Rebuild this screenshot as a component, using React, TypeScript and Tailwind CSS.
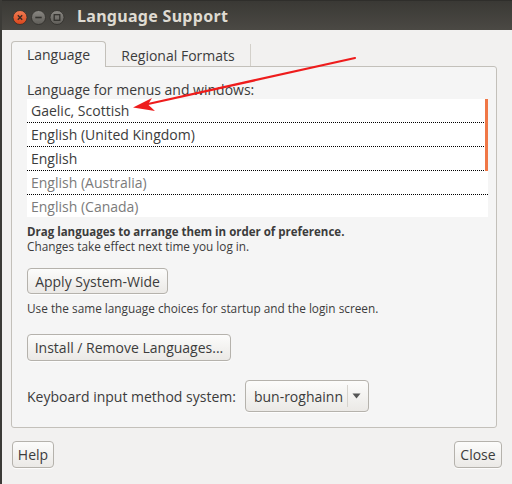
import React from "react";

const font = { fontFamily: '"Open Sans", "Noto Sans", sans-serif' };

const languages = [
  { name: "Gaelic, Scottish", active: true },
  { name: "English (United Kingdom)", active: true },
  { name: "English", active: true },
  { name: "English (Australia)", active: false },
  { name: "English (Canada)", active: false },
];

const btn =
  "flex items-center justify-center rounded-[4px] border border-[#b5b2ac] bg-gradient-to-b from-[#fcfcfb] to-[#ebe9e6] text-[#3c3c3c] shadow-[0_1px_0_rgba(255,255,255,0.8)]";

const TitleButtons: React.FC = () => (
  <svg width="64" height="30" viewBox="0 0 64 30" className="shrink-0">
    <defs>
      <linearGradient id="cl" x1="0" y1="0" x2="0" y2="1">
        <stop offset="0" stopColor="#f27d54" />
        <stop offset="1" stopColor="#d9451b" />
      </linearGradient>
      <linearGradient id="gr" x1="0" y1="0" x2="0" y2="1">
        <stop offset="0" stopColor="#8a8883" />
        <stop offset="1" stopColor="#5f5d58" />
      </linearGradient>
    </defs>
    <circle cx="18" cy="16.5" r="7" fill="url(#cl)" stroke="#2e2d2a" strokeWidth="0.8" />
    <path d="M15.8 14.3 L20.2 18.7 M20.2 14.3 L15.8 18.7" stroke="#3a2a24" strokeWidth="1.4" />
    <circle cx="36.5" cy="16.5" r="7" fill="url(#gr)" stroke="#2e2d2a" strokeWidth="0.8" />
    <path d="M33.3 16.5 H39.7" stroke="#34332f" strokeWidth="1.6" />
    <circle cx="55" cy="16.5" r="7" fill="url(#gr)" stroke="#2e2d2a" strokeWidth="0.8" />
    <rect x="52.2" y="13.7" width="5.6" height="5.6" fill="none" stroke="#34332f" strokeWidth="1.3" />
  </svg>
);

const App: React.FC = () => {
  return (
    <div
      className="relative w-[512px] h-[484px] flex flex-col bg-[#f2f1f0] border-l-2 border-[#3c3b37] overflow-hidden"
      style={font}
    >
      {/* title bar */}
      <div className="h-[30px] flex items-center bg-gradient-to-b from-[#3a3935] to-[#4b4944] border-t border-[#2f2e2b]">
        <TitleButtons />
        <span
          className="ml-[11px] text-[16px] font-bold text-[#dfdbd2] tracking-[0.3px]"
          style={{ fontFamily: '"Noto Sans", "Open Sans", sans-serif' }}
        >
          Language Support
        </span>
      </div>

      {/* tabs */}
      <div className="flex items-end ml-[9px] mt-[11px] h-[25px]">
        <div className="relative z-10 h-[26px] w-[95px] mb-[-1px] flex items-center justify-center rounded-t-[4px] border border-b-0 border-[#c3c0ba] bg-[#f5f5f5] text-[14px] text-[#3c3c3c]">
          Language
        </div>
        <div className="h-[22px] w-[145px] flex items-center justify-center border-r border-[#d3d0ca] text-[14px] text-[#3c3c3c]">
          Regional Formats
        </div>
      </div>

      {/* notebook panel */}
      <div className="ml-[9px] w-[486px] border border-[#c3c0ba] rounded-b-[3px] rounded-tr-[3px] bg-[#f5f5f5] pl-[15px] pt-[14px] pb-[15px]">
        <div className="leading-[18px] text-[14px] text-[#3c3c3c]">
          Language for menus and windows:
        </div>
        <div className="relative w-[461px] bg-white">
          {languages.map((l, i) => (
            <div
              key={l.name}
              className={
                i < languages.length - 1
                  ? "h-[24px] flex items-center pl-[4px] border-b border-dotted border-black text-[14px]"
                  : "h-[22px] flex items-center pl-[4px] text-[14px]"
              }
            >
              <span className={l.active ? "text-[#3c3c3c]" : "text-[#7b7b7b]"}>{l.name}</span>
            </div>
          ))}
          <div className="absolute right-0 top-0 w-[3px] h-[72px] bg-[#f07746]" />
        </div>

        <div className="mt-[7px] leading-[15px] text-[11.5px] font-bold text-[#3c3c3c]">
          Drag languages to arrange them in order of preference.
        </div>
        <div className="leading-[15px] text-[11.8px] text-[#3c3c3c]">
          Changes take effect next time you log in.
        </div>

        <button className={`${btn} mt-[14px] w-[141px] h-[26px] text-[14px]`}>
          Apply System-Wide
        </button>

        <div className="mt-[7px] leading-[15px] text-[11.8px] text-[#3c3c3c]">
          Use the same language choices for startup and the login screen.
        </div>

        <button className={`${btn} mt-[18px] w-[204px] h-[27px] text-[14px]`}>
          Install / Remove Languages...
        </button>

        <div className="mt-[19px] flex items-center gap-[9px]">
          <span className="text-[14px] text-[#3c3c3c]">Keyboard input method system:</span>
          <div className={`${btn} w-[124px] h-[32px] justify-start pl-[8px] text-[14px]`}>
            <span>bun-roghainn</span>
            <span className="ml-[4px] w-px h-[22px] bg-[#d6d3ce]" />
            <svg width="9" height="6" viewBox="0 0 9 6" className="ml-[4px]">
              <path d="M0.5 0.5 H8.5 L4.5 5.5 Z" fill="#555" />
            </svg>
          </div>
        </div>
      </div>

      {/* bottom buttons */}
      <div className="mt-[13px] flex justify-between pl-[10px] pr-[10px]">
        <button className={`${btn} w-[42px] h-[27px] text-[14px]`}>Help</button>
        <button className={`${btn} w-[48px] h-[27px] text-[14px]`}>Close</button>
      </div>

      {/* annotation arrow */}
      <svg
        className="absolute left-[-2px] top-0 pointer-events-none"
        width="512"
        height="484"
        viewBox="0 0 512 484"
      >
        <line x1="355" y1="58" x2="148" y2="104" stroke="#ee1c1c" strokeWidth="2.2" strokeLinecap="round" />
        <path d="M133 107.5 L152 98 L148 104.5 L155 111 Z" fill="#ee1c1c" />
      </svg>
    </div>
  );
};

export default App;
